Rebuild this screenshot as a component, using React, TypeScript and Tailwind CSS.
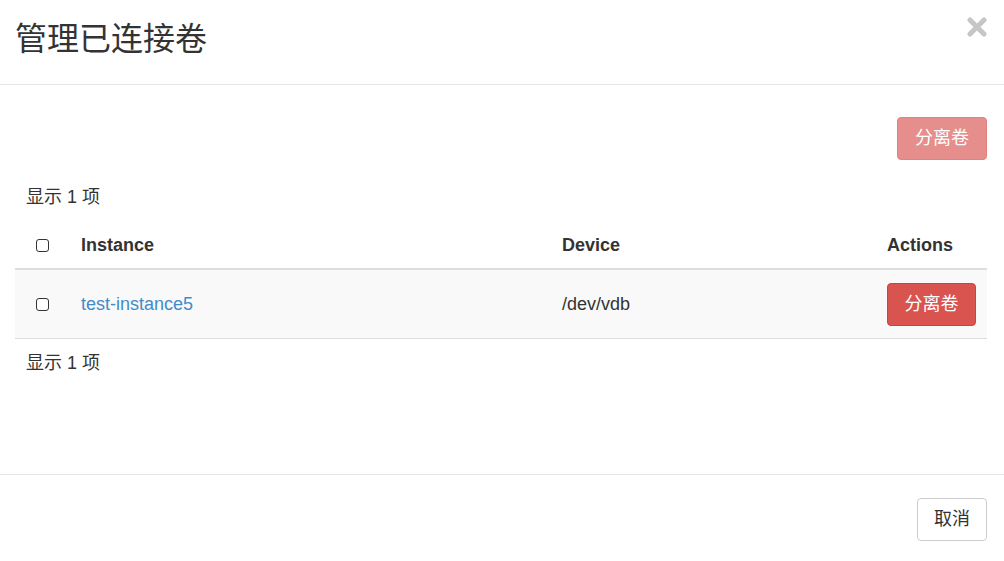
import React from "react";

const font = { fontFamily: '"Liberation Sans", Arial, "Noto Sans CJK SC", sans-serif' };

function Box() {
  return <span className="inline-block w-[13px] h-[13px] rounded-[3px] border-[1.5px] border-[#333] bg-white" />;
}

export default function App() {
  return (
    <div className="w-[1004px] h-[561px] bg-white text-[#333] flex flex-col overflow-hidden" style={font}>
      {/* header */}
      <div className="h-[85px] border-b border-[#e5e5e5] flex items-start justify-between pl-[15px] pr-[17px]">
        <h4 className="text-[32px] leading-[40px] mt-[19px] font-normal text-[#333]">管理已连接卷</h4>
        <svg width="20" height="20" viewBox="0 0 20 20" className="mt-[17px]">
          <path d="M3 3 L17 17 M17 3 L3 17" stroke="#c6c6c6" strokeWidth="5" strokeLinecap="round" />
        </svg>
      </div>
      {/* body */}
      <div className="flex-1 pl-[15px] pr-[17px] pt-[32px] border-b border-[#e5e5e5]">
        <div className="flex justify-end">
          <button className="h-[43px] w-[90px] rounded-[4px] bg-[#d9534f] border border-[#d43f3a] text-white text-[18px] opacity-65">分离卷</button>
        </div>
        <div className="h-[24px] mt-[25px] pl-[11px] text-[18px] leading-[24px]">显示 1 项</div>
        <div className="mt-[13px]">
          <div className="grid grid-cols-[56px_481px_325px_110px] h-[48px] items-center border-b-2 border-[#ddd] text-[18px] font-bold">
            <div className="pl-[21px] flex items-center"><Box /></div>
            <div className="pl-[10px]">Instance</div>
            <div className="pl-[10px]">Device</div>
            <div className="pl-[10px]">Actions</div>
          </div>
          <div className="grid grid-cols-[56px_481px_325px_110px] h-[69px] items-center border-b border-[#ddd] bg-[#f9f9f9] text-[18px]">
            <div className="pl-[21px] flex items-center"><Box /></div>
            <div className="pl-[10px] text-[#428bca]">test-instance5</div>
            <div className="pl-[10px]">/dev/vdb</div>
            <div className="pl-[10px]">
              <button className="h-[43px] w-[89px] rounded-[4px] bg-[#d9534f] border border-[#d43f3a] text-white text-[18px]">分离卷</button>
            </div>
          </div>
        </div>
        <div className="h-[24px] mt-[12px] pl-[11px] text-[18px] leading-[24px]">显示 1 项</div>
      </div>
      {/* footer */}
      <div className="h-[86px] flex justify-end items-start pt-[23px] pr-[17px]">
        <button className="h-[43px] w-[70px] rounded-[4px] bg-white border border-[#ccc] text-[#333] text-[18px]">取消</button>
      </div>
    </div>
  );
}
